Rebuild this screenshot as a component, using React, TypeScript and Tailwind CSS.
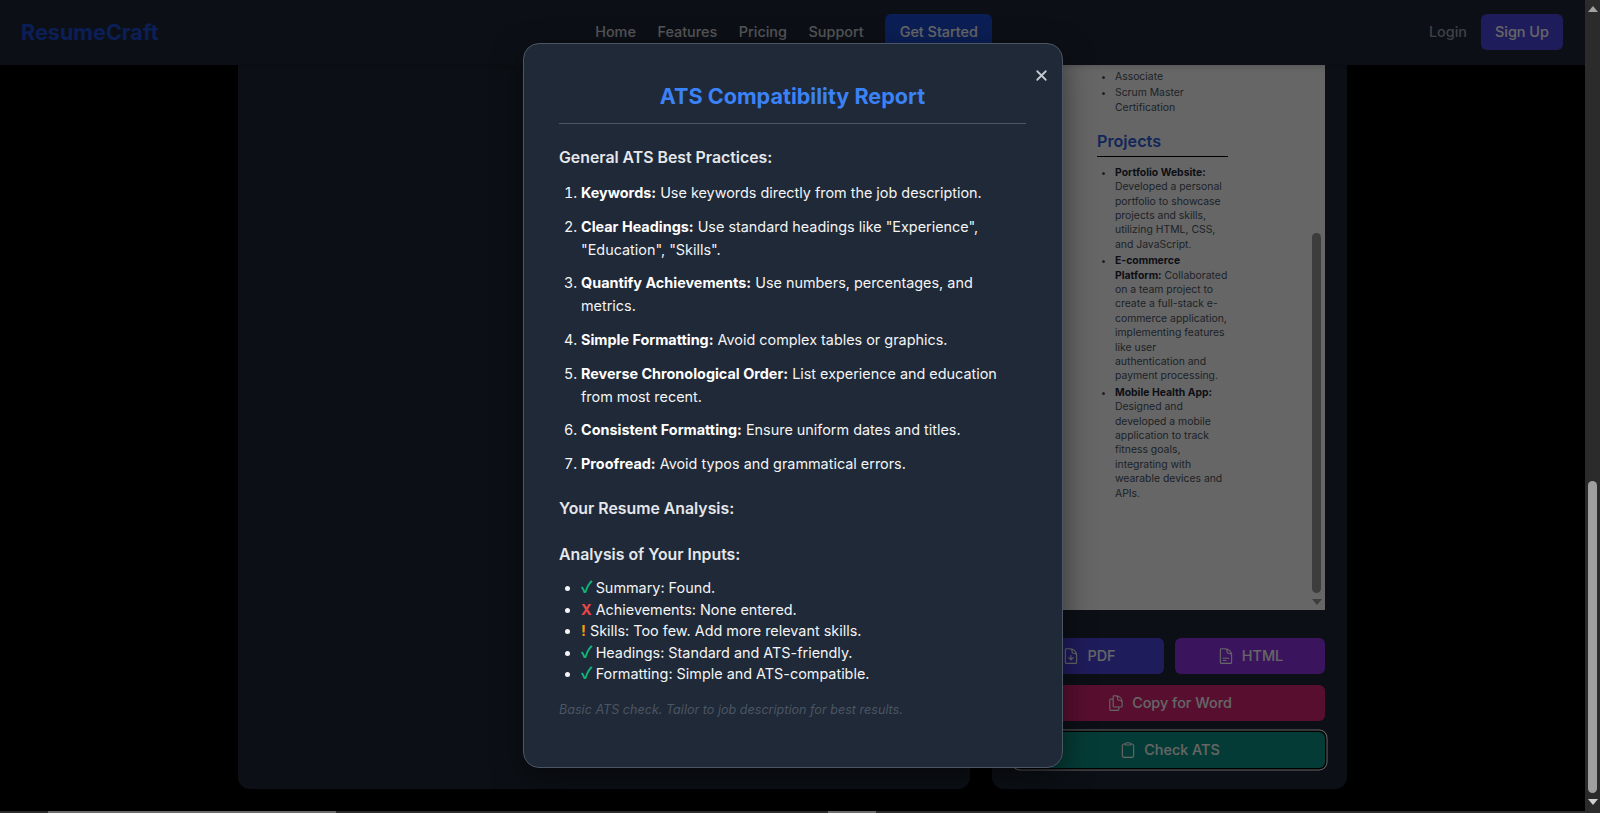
import { X } from "lucide-react";
import {
  HiOutlineDocumentArrowDown,
  HiOutlineDocumentText,
  HiOutlineDocumentDuplicate,
  HiOutlineClipboard,
} from "react-icons/hi2";

const font = { fontFamily: "Inter, 'Liberation Sans', sans-serif" };

function Practice({ b, t }: { b: string; t: string }) {
  return (
    <li className="mb-[10.6px]">
      <strong className="font-bold text-white">{b}</strong> {t}
    </li>
  );
}

function Check({ text }: { text: string }) {
  return (
    <li>
      <span className="-mr-[1px] text-[16px] font-bold leading-none text-[#10b981] [font-family:'Noto_Sans_CJK_JP',sans-serif]">✓</span> {text}
    </li>
  );
}

export default function App() {
  return (
    <div className="flex h-[813px] w-[1600px] flex-col overflow-hidden bg-black" style={font}>
      <div className="flex h-[811px] w-full">
        <div className="relative h-full w-[1585px] overflow-hidden">
          <header className="relative z-10 flex h-[65px] items-center justify-between bg-[#1f2937] pb-[1px] pl-[21px] pr-[22px] shadow-md">
            <div className="text-[21.6px] font-bold text-[#1d4ed8]">ResumeCraft</div>
            <nav className="flex items-center gap-[21.6px] text-[14.4px] font-medium text-[#d1d5db]">
              <span>Home</span>
              <span>Features</span>
              <span>Pricing</span>
              <span>Support</span>
              <span className="flex h-[36px] w-[107px] items-center justify-center rounded-md bg-[#1d4ed8] text-white">Get Started</span>
            </nav>
            <div className="flex items-center gap-[14px] text-[14.4px] font-medium">
              <span className="text-[#9ca3af]">Login</span>
              <span className="flex h-[36px] w-[82px] items-center justify-center rounded-md bg-[#4f46e5] text-white">Sign Up</span>
            </div>
          </header>

          <main className="flex h-[724px] justify-center gap-[22px] pl-[238px] pr-[238px]">
            <section className="h-full flex-1 rounded-b-xl bg-[#1f2937]" />
            <aside className="flex h-full w-[355px] flex-col rounded-b-xl bg-[#1f2937] pl-[23px] pr-[22px]">
              <div className="flex h-[545px] w-full justify-between bg-white pl-[82px] pr-[3px] text-[10.4px] leading-[14.4px] text-[#4b5563]">
                <div className="w-[131px] pt-[5px]">
                  <ul className="list-disc pl-[18px]">
                    <li>Associate</li>
                    <li className="mt-[2px]">Scrum Master Certification</li>
                  </ul>
                  <h3 className="mt-[16px] border-b border-black pb-[5px] text-[16.2px] font-semibold leading-[20px] text-[#2f5fe0]">Projects</h3>
                  <ul className="mt-[8.5px] list-disc pl-[18px]">
                    <li className="mb-[2px]"><strong className="font-bold text-[#1f2937]">Portfolio Website:</strong> Developed a personal portfolio to showcase projects and skills, utilizing HTML, CSS, and JavaScript.</li>
                    <li className="mb-[2px]"><strong className="font-bold text-[#1f2937]">E-commerce Platform:</strong> Collaborated on a team project to create a full-stack e-commerce application, implementing features like user authentication and payment processing.</li>
                    <li><strong className="font-bold text-[#1f2937]">Mobile Health App:</strong> Designed and developed a mobile application to track fitness goals, integrating with wearable devices and APIs.</li>
                  </ul>
                </div>
                <div className="flex w-[11px] flex-col items-center">
                  <div className="mt-[168px] h-[360px] w-[9px] rounded-full bg-[#999999]" />
                  <div className="mt-[6px] h-0 w-0 border-x-[5px] border-t-[6px] border-x-transparent border-t-[#999999]" />
                </div>
              </div>
              <div className="-ml-[1px] mt-[28px] grid grid-cols-2 gap-[11px] text-[14.4px] font-medium text-white">
                <button className="flex h-[36px] items-center justify-center gap-[7px] rounded-md bg-[#4f46e5]"><HiOutlineDocumentArrowDown size={18} />PDF</button>
                <button className="flex h-[36px] items-center justify-center gap-[7px] rounded-md bg-[#9333ea]"><HiOutlineDocumentText size={18} />HTML</button>
                <button className="col-span-2 flex h-[36px] items-center justify-center gap-[7px] rounded-md bg-[#db2777]"><HiOutlineDocumentDuplicate size={18} />Copy for Word</button>
                <button className="col-span-2 flex h-[36px] items-center justify-center gap-[7px] rounded-md bg-[#0d9488] ring-1 ring-white ring-offset-[1.5px] ring-offset-black"><HiOutlineClipboard size={18} />Check ATS</button>
              </div>
            </aside>
          </main>

          <div className="absolute inset-0 z-20 bg-black/60" />

          <div className="absolute left-[523px] top-[43px] z-30 h-[725px] w-[540px] rounded-2xl border border-[#4b5563] bg-[#1f2937] pl-[35px] pr-[36px] pt-[37px] text-[14.4px] leading-[23.04px] text-[#f3f4f6] shadow-[0_10px_30px_rgba(0,0,0,0.5)]">
            <button className="absolute right-[12px] top-[23px] text-[#c5c9d0]"><X size={17} strokeWidth={2.5} /></button>
            <h2 className="border-b border-[#4b5563] pb-[12px] text-center text-[21.6px] font-bold leading-[30px] text-[#3b82f6]">ATS Compatibility Report</h2>
            <h3 className="mb-[11px] mt-[22px] text-[15.84px] font-semibold leading-[24px] text-[#e5e7eb]">General ATS Best Practices:</h3>
            <ol className="list-decimal pl-[22px]">
              <Practice b="Keywords:" t="Use keywords directly from the job description." />
              <Practice b="Clear Headings:" t={'Use standard headings like "Experience", "Education", "Skills".'} />
              <Practice b="Quantify Achievements:" t="Use numbers, percentages, and metrics." />
              <Practice b="Simple Formatting:" t="Avoid complex tables or graphics." />
              <Practice b="Reverse Chronological Order:" t="List experience and education from most recent." />
              <Practice b="Consistent Formatting:" t="Ensure uniform dates and titles." />
              <Practice b="Proofread:" t="Avoid typos and grammatical errors." />
            </ol>
            <h3 className="mt-[22px] text-[15.84px] font-semibold leading-[24px] text-[#e5e7eb]">Your Resume Analysis:</h3>
            <h3 className="mb-[10px] mt-[22px] text-[15.84px] font-semibold leading-[24px] text-[#e5e7eb]">Analysis of Your Inputs:</h3>
            <ul className="list-disc pl-[22px] leading-[21.6px]">
              <Check text="Summary: Found." />
              <li><span className="font-bold text-[#ef4444]">X</span> Achievements: None entered.</li>
              <li><span className="font-bold text-[#f59e0b]">!</span> Skills: Too few. Add more relevant skills.</li>
              <Check text="Headings: Standard and ATS-friendly." />
              <Check text="Formatting: Simple and ATS-compatible." />
            </ul>
            <p className="mt-[15px] text-[12.6px] italic leading-[20px] text-[#4b5563]">Basic ATS check. Tailor to job description for best results.</p>
          </div>
        </div>

        <div className="relative flex h-full w-[15px] flex-col items-center bg-[#2b2b2b]">
          <div className="mt-[6px] h-0 w-0 border-x-[5px] border-b-[6px] border-x-transparent border-b-[#a3a3a3]" />
          <div className="mt-[469px] h-[312px] w-[9px] rounded-full bg-[#9f9f9f]" />
          <div className="mt-[6px] h-0 w-0 border-x-[5px] border-t-[6px] border-x-transparent border-t-[#d0d0d0]" />
        </div>
      </div>
      <div className="flex h-[2px] w-full bg-[#2b2b2b]">
        <div className="ml-[48px] h-full w-[288px] bg-[#6b6b6b]" />
        <div className="ml-[492px] h-full w-[48px] bg-[#6b6b6b]" />
      </div>
    </div>
  );
}
